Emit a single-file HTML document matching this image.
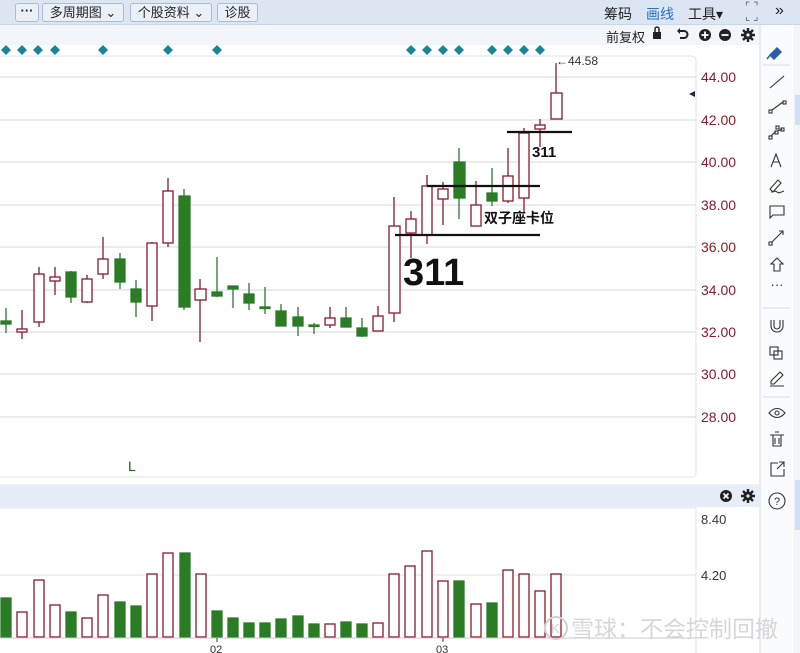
<!DOCTYPE html>
<html><head><meta charset="utf-8"><style>
*{margin:0;padding:0;box-sizing:border-box}
body{width:800px;height:653px;overflow:hidden;background:#fff;font-family:"Liberation Sans","Noto Sans CJK SC",sans-serif;position:relative}
.tb{position:absolute;left:0;top:0;width:800px;height:25px;background:#dce6f3;border-bottom:1px solid #c9d6e6}
.btn{position:absolute;top:3px;height:19px;border:1px solid #a9bdd6;border-radius:3px;background:#e9f0f8;font-size:13px;line-height:17px;color:#222;text-align:center}
.r2{position:absolute;left:0;top:25px;width:760px;height:20px;background:#f2f5f9}
.t{position:absolute;font-size:13px;color:#222;white-space:nowrap}
</style></head><body>
<div class="tb"></div>
<div class="btn" style="left:15px;width:24px;font-weight:bold;line-height:13px">···</div>
<div class="btn" style="left:42px;width:82px">多周期图 ⌄</div>
<div class="btn" style="left:130px;width:82px">个股资料 ⌄</div>
<div class="btn" style="left:217px;width:41px">诊股</div>
<div class="t" style="left:604px;top:4px;font-size:14px">筹码</div>
<div class="t" style="left:646px;top:4px;font-size:14px;color:#2a6fc0">画线</div>
<div class="t" style="left:688px;top:4px;font-size:14px">工具▾</div>
<div class="t" style="left:745px;top:2px;font-size:11px;line-height:10px;color:#555">⌜ ⌝<br>⌞ ⌟</div>
<div class="t" style="left:775px;top:2px;font-size:16px">»</div>
<div class="r2"></div>
<div class="t" style="left:606px;top:27px;font-size:13px">前复权</div>
<svg style="position:absolute;left:0;top:0" width="800" height="653">
<rect x="653" y="32" width="8" height="7" fill="#222"/><path d="M655 32v-3a2 2 0 0 1 4 0v3" stroke="#222" fill="none" stroke-width="1.5"/>
<path d="M679 31h5a3.5 3.5 0 0 1 0 7h-4" stroke="#222" fill="none" stroke-width="2"/><path d="M677 31l3-3v6z" fill="#222"/>
<circle cx="705" cy="35" r="6" fill="#222"/><path d="M705 31.5v7M701.5 35h7" stroke="#fff" stroke-width="1.8"/>
<circle cx="725" cy="35" r="6" fill="#222"/><path d="M721.5 35h7" stroke="#fff" stroke-width="1.8"/>
<g transform="translate(748,35)"><circle r="4.5" fill="#222"/><g stroke="#222" stroke-width="2.4"><path d="M0-7v14M-7 0h14M-5-5l10 10M5-5l-10 10"/></g><circle r="1.6" fill="#f2f5f9"/></g>
<rect x="760" y="25" width="32" height="628" fill="#fafbfd"/>
<line x1="760" y1="25" x2="760" y2="653" stroke="#d5dce6"/>
<rect x="793" y="25" width="7" height="628" fill="#f3f5f8"/>
<rect x="795" y="95" width="5" height="30" fill="#cfe0f5"/>
<rect x="795" y="480" width="5" height="50" fill="#cfe0f5"/>
<path d="M770 55l7-7 4 4-7 7zM771 54l-4 5" fill="#2a5fb0" stroke="#2a5fb0" stroke-width="1.5"/>
<g stroke="#333" stroke-width="1.1" fill="none">
<line x1="763" y1="65" x2="790" y2="65" stroke="#d8dde5"/>
<path d="M770 88l14-12"/>
<rect x="769" y="110" width="3" height="3"/><rect x="783" y="101" width="3" height="3"/><path d="M772 110l11-8"/>
<rect x="769" y="136" width="3" height="3"/><rect x="775" y="131" width="3" height="3"/><rect x="781" y="128" width="3" height="3"/><rect x="776" y="126" width="3" height="3"/><path d="M771 136l5-5M778 131l4-2"/>
<path d="M771 167l5-13 5 13M773 162h6"/>
<path d="M770 189l8-9 3 3-8 9zM771 192c3 0 4-2 6 0s4 0 7-1"/>
<path d="M770 206h14v9h-11l-3 3z"/>
<rect x="769" y="242" width="3" height="3"/><path d="M772 242l11-11M779 231h4v4"/>
<path d="M777 258l-6 6h3v7h6v-7h3z"/>
<line x1="763" y1="308" x2="790" y2="308" stroke="#d8dde5"/>
<path d="M771 320v6a6 6 0 0 0 12 0v-6M774 320v6a3 3 0 0 0 6 0v-6"/>
<rect x="770" y="347" width="8" height="8"/><rect x="774" y="351" width="8" height="8"/>
<path d="M771 381l9-9 3 3-9 9h-3zM770 386h14"/>
<line x1="763" y1="397" x2="790" y2="397" stroke="#d8dde5"/>
<path d="M769 413c5-6 11-6 16 0c-5 6-11 6-16 0z"/><circle cx="777" cy="413" r="2"/>
<path d="M770 435h14M773 435v11h8v-11M775 432h4M775 438v6M779 438v6"/>
<path d="M778 463h-7v13h13v-7M779 462h5v5M784 462l-7 7"/>
<circle cx="777" cy="501" r="8"/>
</g>
<text x="777" y="289" font-size="13" text-anchor="middle" fill="#333">···</text>
<text x="777" y="505" font-size="11" text-anchor="middle" fill="#333" font-family="Liberation Sans">?</text>
<g fill="#1a8593">
<path d="M6 45l5 5-5 5-5-5z"/><path d="M22 45l5 5-5 5-5-5z"/><path d="M38 45l5 5-5 5-5-5z"/><path d="M55 45l5 5-5 5-5-5z"/><path d="M103 45l5 5-5 5-5-5z"/><path d="M168 45l5 5-5 5-5-5z"/><path d="M217 45l5 5-5 5-5-5z"/><path d="M411 45l5 5-5 5-5-5z"/><path d="M427 45l5 5-5 5-5-5z"/><path d="M443 45l5 5-5 5-5-5z"/><path d="M459 45l5 5-5 5-5-5z"/><path d="M492 45l5 5-5 5-5-5z"/><path d="M508 45l5 5-5 5-5-5z"/><path d="M524 45l5 5-5 5-5-5z"/><path d="M540 45l5 5-5 5-5-5z"/>
</g>
<path d="M0 56H692a4 4 0 0 1 4 4V473a4 4 0 0 1-4 4H0" fill="none" stroke="#dfe3e8"/>
<g stroke="#dde1e6" stroke-width="1.2">
<line x1="0" y1="77" x2="696" y2="77"/><line x1="0" y1="120" x2="696" y2="120"/><line x1="0" y1="162" x2="696" y2="162"/><line x1="0" y1="205" x2="696" y2="205"/><line x1="0" y1="247" x2="696" y2="247"/><line x1="0" y1="290" x2="696" y2="290"/><line x1="0" y1="332" x2="696" y2="332"/><line x1="0" y1="374" x2="696" y2="374"/><line x1="0" y1="417" x2="696" y2="417"/>
</g>
<g font-size="14" fill="#8b1a2a" font-family="Liberation Sans">
<text x="701" y="82">44.00</text><text x="701" y="125">42.00</text><text x="701" y="167">40.00</text><text x="701" y="210">38.00</text><text x="701" y="252">36.00</text><text x="701" y="295">34.00</text><text x="701" y="337">32.00</text><text x="701" y="379">30.00</text><text x="701" y="422">28.00</text>
</g>
<path d="M689 94l6-3v6z" fill="#1b2a4a"/>
<text x="556" y="65" font-size="12" fill="#333">←44.58</text>
<text x="128" y="471" font-size="14" fill="#1a6a1a">L</text>
<g stroke-width="1.3">
<g stroke="#2a7a2a" fill="#2a7d22">
<line x1="6" y1="308" x2="6" y2="333"/><rect x="1" y="321" width="10" height="3"/>
<line x1="71" y1="271" x2="71" y2="303"/><rect x="66" y="272" width="10" height="25"/>
<line x1="120" y1="253" x2="120" y2="289"/><rect x="115" y="259" width="10" height="23"/>
<line x1="136" y1="280" x2="136" y2="317"/><rect x="131" y="289" width="10" height="13"/>
<line x1="184" y1="189" x2="184" y2="310"/><rect x="179" y="196" width="11" height="111"/>
<line x1="217" y1="257" x2="217" y2="297"/><rect x="212" y="292" width="10" height="4"/>
<line x1="233" y1="286" x2="233" y2="308"/><rect x="228" y="286" width="10" height="3"/>
<line x1="249" y1="283" x2="249" y2="310"/><rect x="244" y="294" width="10" height="9"/>
<line x1="265" y1="287" x2="265" y2="314"/><rect x="260" y="307" width="10" height="1.5"/>
<line x1="281" y1="304" x2="281" y2="326"/><rect x="276" y="311" width="10" height="15"/>
<line x1="298" y1="307" x2="298" y2="336"/><rect x="293" y="317" width="10" height="9"/>
<line x1="314" y1="323" x2="314" y2="334"/><rect x="309" y="325" width="10" height="1.5"/>
<line x1="346" y1="307" x2="346" y2="327"/><rect x="341" y="318" width="10" height="9"/>
<line x1="362" y1="318" x2="362" y2="337"/><rect x="357" y="328" width="10" height="8"/>
<line x1="459" y1="148" x2="459" y2="219"/><rect x="454" y="162" width="11" height="36"/>
<line x1="492" y1="168" x2="492" y2="206"/><rect x="487" y="193" width="10" height="8"/>
</g>
<g stroke="#8b1a2a" fill="#fff">
<line x1="22" y1="310" x2="22" y2="339"/><rect x="17" y="329" width="10" height="3"/>
<line x1="39" y1="267" x2="39" y2="327"/><rect x="34" y="274" width="10" height="48"/>
<line x1="55" y1="267" x2="55" y2="295"/><rect x="50" y="277" width="10" height="4"/>
<line x1="87" y1="275" x2="87" y2="303"/><rect x="82" y="279" width="10" height="23"/>
<line x1="103" y1="237" x2="103" y2="279"/><rect x="98" y="259" width="10" height="15"/>
<line x1="152" y1="242" x2="152" y2="321"/><rect x="147" y="243" width="10" height="63"/>
<line x1="168" y1="178" x2="168" y2="247"/><rect x="163" y="191" width="10" height="52"/>
<line x1="200" y1="279" x2="200" y2="342"/><rect x="195" y="289" width="11" height="11"/>
<line x1="330" y1="307" x2="330" y2="328"/><rect x="325" y="318" width="10" height="7"/>
<line x1="378" y1="306" x2="378" y2="331"/><rect x="373" y="316" width="10" height="15"/>
<line x1="394" y1="197" x2="394" y2="322"/><rect x="389" y="226" width="11" height="87"/>
<line x1="411" y1="211" x2="411" y2="258"/><rect x="406" y="219" width="10" height="14"/>
<line x1="427" y1="175" x2="427" y2="244"/><rect x="422" y="186" width="10" height="49"/>
<line x1="443" y1="182" x2="443" y2="225"/><rect x="438" y="189" width="10" height="10"/>
<line x1="476" y1="181" x2="476" y2="226"/><rect x="471" y="205" width="10" height="21"/>
<line x1="508" y1="148" x2="508" y2="203"/><rect x="503" y="176" width="10" height="25"/>
<line x1="524" y1="128" x2="524" y2="212"/><rect x="519" y="133" width="10" height="65"/>
<line x1="540" y1="119" x2="540" y2="147"/><rect x="535" y="125" width="10" height="4"/>
<line x1="556" y1="63" x2="556" y2="93"/><rect x="551" y="93" width="11" height="26"/>
</g>
</g>
<g stroke="#111" stroke-width="2.2">
<line x1="507" y1="132" x2="572" y2="132"/><line x1="427" y1="186" x2="540" y2="186"/><line x1="395" y1="235" x2="540" y2="235"/>
</g>
<text x="532" y="157" font-size="15" font-weight="bold" fill="#111">311</text>
<text x="484" y="223" font-size="14" font-weight="bold" fill="#111">双子座卡位</text>
<text x="403" y="285" font-size="38" font-weight="bold" fill="#111">311</text>
<rect x="0" y="486" width="760" height="21" fill="#e6edf9"/>
<line x1="0" y1="485" x2="760" y2="485" stroke="#dfe3e8"/><line x1="0" y1="508" x2="696" y2="508" stroke="#dfe3e8"/>
<circle cx="726" cy="496" r="6" fill="#222"/><path d="M723.5 493.5l5 5M728.5 493.5l-5 5" stroke="#fff" stroke-width="1.6"/>
<g transform="translate(748,496)"><circle r="4.5" fill="#222"/><g stroke="#222" stroke-width="2.4"><path d="M0-7v14M-7 0h14M-5-5l10 10M5-5l-10 10"/></g><circle r="1.6" fill="#e6edf9"/></g>
<line x1="696" y1="508" x2="696" y2="653" stroke="#dfe3e8"/>
<line x1="0" y1="575" x2="696" y2="575" stroke="#dde1e6"/>
<text x="701" y="524" font-size="13" fill="#333">8.40</text>
<text x="701" y="580" font-size="13" fill="#333">4.20</text>
<g stroke-width="1.3">
<g fill="#2a7d22" stroke="#2a7a2a">
<rect x="1" y="598" width="10" height="39"/><rect x="66" y="612" width="10" height="25"/><rect x="115" y="602" width="10" height="35"/><rect x="131" y="606" width="10" height="31"/><rect x="180" y="553" width="10" height="84"/><rect x="212" y="611" width="10" height="26"/><rect x="228" y="618" width="10" height="19"/><rect x="244" y="623" width="10" height="14"/><rect x="260" y="623" width="10" height="14"/><rect x="276" y="619" width="10" height="18"/><rect x="293" y="616" width="10" height="21"/><rect x="309" y="624" width="10" height="13"/><rect x="341" y="622" width="10" height="15"/><rect x="357" y="624" width="10" height="13"/><rect x="454" y="581" width="10" height="56"/><rect x="487" y="603" width="10" height="34"/>
</g>
<g fill="#fff" stroke="#8b1a2a">
<rect x="17" y="612" width="10" height="25"/><rect x="34" y="580" width="10" height="57"/><rect x="50" y="605" width="10" height="32"/><rect x="82" y="618" width="10" height="19"/><rect x="98" y="595" width="10" height="42"/><rect x="147" y="574" width="10" height="63"/><rect x="163" y="553" width="10" height="84"/><rect x="196" y="574" width="10" height="63"/><rect x="325" y="624" width="10" height="13"/><rect x="373" y="623" width="10" height="14"/><rect x="389" y="574" width="10" height="63"/><rect x="405" y="566" width="10" height="71"/><rect x="422" y="551" width="10" height="86"/><rect x="438" y="581" width="10" height="56"/><rect x="471" y="604" width="10" height="33"/><rect x="503" y="570" width="10" height="67"/><rect x="519" y="574" width="10" height="63"/><rect x="535" y="591" width="10" height="46"/><rect x="551" y="574" width="10" height="63"/>
</g>
</g>
<line x1="0" y1="638" x2="696" y2="638" stroke="#ccc"/>
<line x1="217" y1="638" x2="217" y2="642" stroke="#333"/><line x1="443" y1="638" x2="443" y2="642" stroke="#333"/>
<text x="210" y="653" font-size="11" fill="#333">02</text><text x="436" y="653" font-size="11" fill="#333">03</text>
<circle cx="556" cy="628" r="11" fill="none" stroke="#d0d0d0" stroke-width="2"/>
<text x="551" y="633" font-size="13" fill="#d0d0d0">K</text>
<text x="571" y="637" font-size="23" fill="#d0d0d0" fill-opacity="0.85">雪球：不会控制回撤</text>
</svg>
</body></html>
